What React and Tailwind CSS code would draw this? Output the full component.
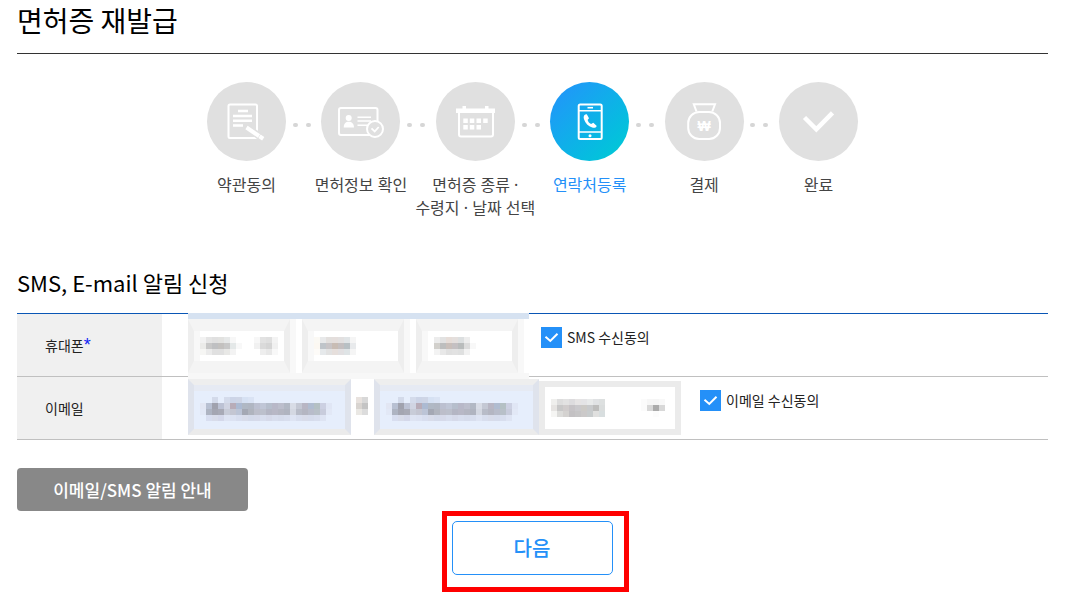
import React, { useState } from 'react';
import clsx from 'clsx';

const TermsIcon = () => (
  <svg viewBox="0 0 79 79" className="size-full" fill="none" stroke="#fff" strokeWidth="2">
    <rect x="21.500" y="22.500" width="28.500" height="33.500" rx="1.500" />
    <path d="M31 29h10M26 34h19M26 38.700h19M26 43.500h10" strokeWidth="2.400" />
    <path d="M39.500 45.500L56 56.500" stroke="#e0e0e0" strokeWidth="7" />
    <path d="M39.500 45.500L52 54" strokeWidth="4" />
    <path d="M52.500 54.300l3.700 2.400" strokeWidth="4" />
  </svg>
);

const LicenseIcon = () => (
  <svg viewBox="0 0 79 79" className="size-full" fill="none" stroke="#fff" strokeWidth="2">
    <rect x="18" y="26" width="38.500" height="27" rx="2" />
    <circle cx="27.700" cy="36" r="3" fill="#fff" stroke="none" />
    <path d="M22.700 45.500c0-4 2-5.800 5-5.800s5.300 1.800 5.300 5.800z" fill="#fff" stroke="none" />
    <path d="M36.500 35.200h13.500M36.500 39h13.500M36.500 43.200h13" strokeWidth="1.400" />
    <circle cx="54" cy="47" r="8" fill="#e0e0e0" />
    <path d="M50.500 46.300l3.200 3.200 4-4.500" strokeWidth="1.800" />
  </svg>
);

const CalendarIcon = () => (
  <svg viewBox="0 0 79 79" className="size-full" fill="#fff">
    <path d="M20 26.500h39v4.500H20zM26.500 24h3.500v4h-3.500zM49 24h3.500v4H49z" />
    <path d="M23 30v22.500q0 2 2 2h30q2 0 2-2V30" fill="none" stroke="#fff" strokeWidth="2" />
    <path d="M27.300 36.500h4.500v4.500h-4.500zM33.800 36.500h4.500v4.500h-4.500zM40.500 36.500h4.500v4.500h-4.500zM47.200 36.500h4.500v4.500h-4.500z" />
    <path d="M27.300 43h4.500v4.500h-4.500zM33.800 43h4.500v4.500h-4.500zM40.500 43h4.500v4.500h-4.500z" />
  </svg>
);

const PhoneIcon = () => (
  <svg viewBox="0 0 79 79" className="size-full" fill="none" stroke="#fff" strokeWidth="2">
    <rect x="28.700" y="22.500" width="23" height="34.500" rx="1.500" />
    <path d="M28.500 28.800h23M28.500 50h23" strokeWidth="1.600" />
    <path d="M37.500 25.700h5.500" strokeWidth="1.600" />
    <circle cx="40" cy="53.700" r="1.500" fill="#fff" stroke="none" />
    <path
      d="M35.200 32.600c-1.500 1-1.900 2.600-1.200 4.700 1.300 4 4.300 7 8.200 8.300 2.200.700 3.800 0 4.600-1.700l-3.500-3.200-2.200 1.400c-1.900-.900-2.900-2.100-3.500-4l1.400-1.900-2.200-3.900z"
      fill="#fff"
      stroke="none"
    />
  </svg>
);

const PaymentIcon = () => (
  <svg viewBox="0 0 79 79" className="size-full" fill="none" stroke="#fff" strokeWidth="2">
    <path d="M31.500 29.500L28.800 22.300h21.200l-2.700 7.200" />
    <rect x="23.200" y="30" width="31.800" height="27" rx="11" />
    <text
      x="39"
      y="49"
      textAnchor="middle"
      fill="#fff"
      stroke="none"
      fontSize="14"
      fontWeight="700"
      fontFamily="'Liberation Sans', sans-serif"
    >
      ₩
    </text>
  </svg>
);

const DoneIcon = () => (
  <svg viewBox="0 0 79 79" className="size-full" fill="none" stroke="#fff" strokeWidth="4.500">
    <path d="M25.500 35.500L37.300 47.300 53.500 30.800" />
  </svg>
);

const steps = [
  { label: ['약관동의'], Icon: TermsIcon },
  { label: ['면허정보 확인'], Icon: LicenseIcon },
  { label: ['면허증 종류 ·', '수령지 · 날짜 선택'], Icon: CalendarIcon },
  { label: ['연락처등록'], Icon: PhoneIcon, active: true },
  { label: ['결제'], Icon: PaymentIcon },
  { label: ['완료'], Icon: DoneIcon },
];

// Masked personal data, one colour per 6px block
const masks = {
  carrier: [
    'f2f2f2 e4e4e4 e0e0e0 e2e2e0 e6e8e8 f7f7f7 - - - f7f7f7 e2e2e2 dfdfdf f3f3f3',
    'ebebe9 c8c8c8 bfc0c2 c3c1bf c8c8c8 e4e8e8 f8f8f8 - - f1f1f1 dadada d5d5d5 f0f0f0',
    'f6f6f4 ebebeb e0e0e0 e0e0e0 e8e8e6 f3f3f3 - - - - eeeeee e8e8e8 f8f8f8',
  ],
  phoneMiddle: [
    'fbf9f4 e8e9ea e2dfdd e4dedc e2e0e0 e0e4e6 f5f5f5',
    'fcf8f2 bfc4c9 c8c4c6 c8bcb4 c4bfc0 b8c0c4 e8eaec',
    'fdfbf8 e6e9eb e2e2e2 e6dfdc e2e0e2 dfe4e6 f5f5f5',
  ],
  phoneLast: [
    'ececec e2e2e2 e6ddd8 e4dfdd dcdfe0 ededed',
    'd2d0cc bdbebe c9bfba c4c0c2 b9bcbc dcdcdc f8f8f8',
    'f3f3f3 e8e8e8 e0e0e0 e2e2e2 dfe0e0 f2f2f2',
  ],
  email: [
    '- - d3daea - d4dbeb ccd4e7 ced5e6 d6e1f3 dae3f4 - - - - - - - - - - - -',
    'e2e6f3 b8c0d2 a0a2ae bcc2d4 d0d4e2 b8acb8 acbad2 b0b8c4 b0b6c2 bcc0d0 c0c6d6 b6becc b8b8c8 bcbecc b2b8c4 d8dce6 c4c8d4 b8b6c4 b0bcd0 b4c0c4 ccd0e2 e0e6f5',
    'e2e8f6 aeb4c2 a4a6b2 a8aab6 c8ccd8 c4c6d2 bcc4d6 a4a8b4 b0b4be bcbeca bcc0cc b4b6c4 b8b8c6 b4b6c2 b0b4c0 d4d8e2 b8bcc8 b4b6c2 b8bcca b8c0c8 c8ccdc e2e8f6',
    '- d8def0 d8dcea d4d8ea dee4f3 dce2f2 d8deef d8dcea d4daea d6daea d8deee d6daea d8deee d6dcec d8deee dee4f3 d8deee d8dcea d6dcec d8deee dee4f3 -',
  ],
  domain: [
    'efefed dddddd e2e2e2 dddcde e6e4e4 e4e4e6 e8eaea e0e2e4 dde0e0 - - - - - - fbfbfb f6f6f6 f5f5f5 f8f8f8',
    'e6e4e2 c8c8c8 d0cccc c6c3c6 cac9cc cccac6 c8cacc bdbdbc dadddd - - - - - - fbfbfb d8d8d8 ababab d8d8d8',
    'f5f5f3 dcdcda d4d2d0 c3c1c3 c6c5c6 cbc9c9 c8cccd e0e0df d8dedf - - - - - - - - fcfcfc -',
  ],
  at: ['e8e2de d8d8d8', 'd8d4d0 c4c4c4', 'eae8e4 dcdcdc'],
};

const Mask = ({ name, className }) => {
  const rows = masks[name].map((row) => row.split(' '));
  const width = Math.max(...rows.map((row) => row.length)) * 6;
  return (
    <svg
      width={width}
      height={rows.length * 6}
      shapeRendering="crispEdges"
      aria-hidden="true"
      className={clsx('pointer-events-none', className)}
    >
      {rows.map((row, y) =>
        row.map((color, x) =>
          color === '-' ? null : <rect key={`${x}-${y}`} x={x * 6} y={y * 6} width="6" height="6" fill={`#${color}`} />
        )
      )}
    </svg>
  );
};

const phoneField =
  'block w-[102px] h-[54px] appearance-none bg-white border-y-12 border-x-6 border-y-[#f4f4f4] border-x-[#eeeeee] shadow-[inset_6px_0_#f8f8f8,6px_0_#f8f8f8] rounded-none outline-none';
const emailField =
  'block w-full h-14 bg-[#e6eefc] border-6 border-x-[#dfe3ec] border-t-[#eeeeee] border-b-[#ebebeb] shadow-[inset_0_6px_#e6eaf3] rounded-none outline-none';

const AgreeCheckbox = ({ label, className }) => {
  const [checked, setChecked] = useState(true);
  return (
    <label className={clsx('flex items-start gap-[5px] text-sm leading-5 text-[#222] whitespace-nowrap', className)}>
      <span className="relative block size-[21px]">
        <input
          type="checkbox"
          checked={checked}
          onChange={(e) => setChecked(e.target.checked)}
          className="block size-[21px] appearance-none border border-[#2490f8] bg-white checked:bg-[#2490f8]"
        />
        <svg viewBox="0 0 21 21" className="absolute inset-0 pointer-events-none" fill="none" stroke="#fff" strokeWidth="2">
          <path d="M4.500 9.800L9.300 14 16.500 6.800" />
        </svg>
      </span>
      {label}
    </label>
  );
};

const App = () => {
  return (
    <main className="pl-[17px] pr-[30px] pb-5 bg-white text-black font-['Noto_Sans_CJK_KR','Noto_Sans',sans-serif]">
      <h1 className="h-[54px] text-[28px] leading-10 border-b border-[#333]">면허증 재발급</h1>

      {/* Progress steps */}
      <ol className="flex justify-center w-full max-w-[651px] mx-auto mt-7 text-base leading-[23px] text-[#444]">
        {steps.map(({ label, Icon, active }, index) => (
          <React.Fragment key={label[0]}>
            {index > 0 && (
              <li aria-hidden="true" className="flex flex-1 justify-center gap-2 pt-[41px] pr-1">
                <span className="w-[5px] h-1 rounded-full bg-[#d6d6d6]" />
                <span className="w-[5px] h-1 rounded-full bg-[#d6d6d6]" />
              </li>
            )}
            <li
              aria-current={active ? 'step' : undefined}
              className="flex flex-col items-center gap-[13px] w-[79px] shrink-0"
            >
              <span
                className={clsx(
                  'block size-[79px] rounded-full',
                  active ? 'bg-linear-to-br from-[#2490fc] to-[#02cdd2]' : 'bg-[#e0e0e0]'
                )}
              >
                <Icon />
              </span>
              <span
                className={clsx(
                  "text-center whitespace-nowrap font-['Noto_Sans','Noto_Sans_CJK_KR',sans-serif]",
                  active && 'text-[#2490f8]'
                )}
              >
                {label.map((line) => (
                  <span key={line} className="block">{line}</span>
                ))}
              </span>
            </li>
          </React.Fragment>
        ))}
      </ol>

      <h2 className="mt-[46px] pb-3.5 text-[22px] leading-[33px]">SMS, E-mail 알림 신청</h2>

      <table className="w-full border-separate border-spacing-0 border-t border-[#0a56b5] text-sm text-[#222]">
        <tbody>
          <tr>
            <th scope="row" className="w-[145px] pl-7 text-left font-normal bg-[#f0f0f0] border-b border-[#c0c0c0]">
              휴대폰<span className="text-lg leading-none text-[#0c25f5] font-['Liberation_Sans',sans-serif]">*</span>
            </th>
            <td className="p-0 pl-[26px] h-[63px] border-b border-[#c0c0c0]">
              <div className="flex items-start gap-3">
                <div className="relative flex gap-3 w-[341px] h-[66px] -mt-px -mb-[3px] border-t-6 border-b-6 border-t-[#d6e2f1] border-b-[#f7f7f7] bg-white">
                  <div className="relative">
                    <select aria-label="휴대폰 앞자리" className={phoneField}>
                      <option></option>
                    </select>
                    <Mask name="carrier" className="absolute left-3 top-[18px]" />
                  </div>
                  <div className="relative">
                    <input type="tel" aria-label="휴대폰 가운데자리" className={phoneField} />
                    <Mask name="phoneMiddle" className="absolute left-3 top-[18px]" />
                  </div>
                  <div className="relative">
                    <input type="tel" aria-label="휴대폰 뒷자리" className={phoneField} />
                    <Mask name="phoneLast" className="absolute left-[18px] top-[18px]" />
                  </div>
                </div>
                <AgreeCheckbox label="SMS 수신동의" className="mt-[13px]" />
              </div>
            </td>
          </tr>
          <tr>
            <th scope="row" className="pl-7 text-left font-normal bg-[#f0f0f0] border-b border-[#c0c0c0]">이메일</th>
            <td className="p-0 pl-[26px] h-[63px] border-b border-[#c0c0c0] align-top">
              <div className="flex items-start pt-0.5">
                <div className="relative w-[163px]">
                  <input type="text" aria-label="이메일 아이디" className={emailField} />
                  <Mask name="email" className="absolute left-3 top-[18px]" />
                </div>
                <Mask name="at" className="mx-[5px] mt-[18px]" />
                <div className="relative w-[165px] ml-px">
                  <input type="text" aria-label="이메일 도메인" className={emailField} />
                  <Mask name="email" className="absolute left-3 top-[18px]" />
                </div>
                <div className="relative mt-0.5">
                  <select
                    aria-label="이메일 도메인 선택"
                    className="block w-[142px] h-[54px] appearance-none bg-white border-6 border-[#ebebeb] rounded-none"
                  >
                    <option></option>
                  </select>
                  <Mask name="domain" className="absolute left-3 top-[18px]" />
                </div>
                <AgreeCheckbox label="이메일 수신동의" className="mt-[11px] ml-[19px]" />
              </div>
            </td>
          </tr>
        </tbody>
      </table>

      <button type="button" className="block mt-7 w-[231px] h-[43px] rounded bg-[#888] text-white text-[17px] font-medium">
        이메일/SMS 알림 안내
      </button>

      <div className="w-fit mx-auto pl-[5px]">
        <div className="border-5 border-[#f00] pt-[5px] pb-3 pl-[5px] pr-[11px]">
          <button
            type="button"
            className="block w-[161px] h-[54px] rounded-[5px] border border-[#2490f8] bg-white text-[#2490f8] text-xl font-medium"
          >
            다음
          </button>
        </div>
      </div>
    </main>
  );
};

export default App;
